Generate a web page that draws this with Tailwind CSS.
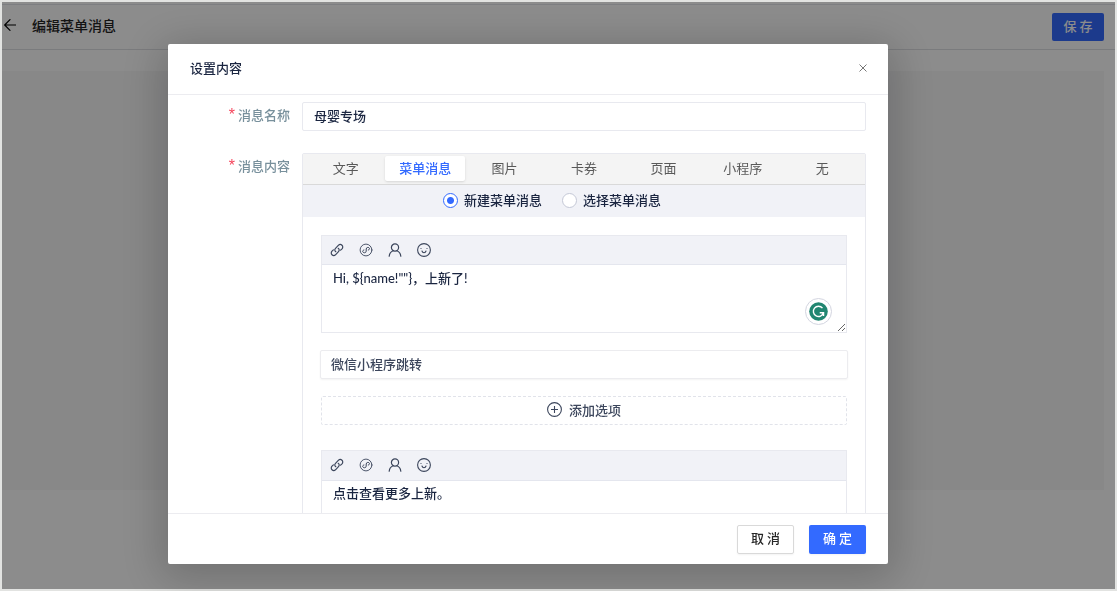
<!DOCTYPE html>
<html lang="zh-CN">
<head>
<meta charset="utf-8">
<title>编辑菜单消息</title>
<script src="https://cdn.jsdelivr.net/npm/@tailwindcss/browser@4"></script>
</head>
<body class="h-screen overflow-hidden border-2 border-[#e2e3e1] bg-white font-['Noto_Sans_CJK_SC',sans-serif] text-[13px] leading-5 font-medium text-[#1a2540]">
<svg class="hidden" aria-hidden="true">
  <symbol id="link" viewBox="0 0 14 14"><g fill="none" stroke="currentColor" stroke-width="1.2" stroke-linecap="round"><path d="M5.800 8.700C4.500 7.800 4.500 6.300 5.500 5.300l2.800-2.900c1.100-1.100 2.700-1.100 3.700-.2s1 2.500 0 3.600L10.600 7.200"/><path d="M8.200 5.300c1.300.9 1.300 2.400.3 3.400l-2.800 2.900c-1.100 1.100-2.700 1.100-3.700.2s-1-2.500 0-3.600L3.400 6.800"/></g></symbol>
  <symbol id="mini" viewBox="0 0 14 14"><g fill="none" stroke="currentColor" stroke-linecap="round"><circle cx="7" cy="7" r="5.900" stroke-width=".9"/><path d="M9.300 7c.9-.2 1.300-.8 1.200-1.500-.3-1.600-3.300-1.500-3.300.5v2.200c0 2-3.200 2-3.500.4-.1-.8.300-1.400 1.200-1.600" stroke-width="1"/></g></symbol>
  <symbol id="user" viewBox="0 0 14 14"><g fill="none" stroke="currentColor" stroke-width="1.200" stroke-linecap="round"><circle cx="7" cy="4.500" r="3.600"/><path d="M1.200 13.200c.3-2.800 1.800-4.600 4-5.400M12.800 13.200c-.3-2.800-1.800-4.600-4-5.400"/></g></symbol>
  <symbol id="smile" viewBox="0 0 14 14"><circle cx="7" cy="7" r="6.400" fill="none" stroke="currentColor" stroke-width="1.100"/><circle cx="4" cy="5.500" r=".6" fill="currentColor"/><circle cx="10" cy="5.500" r=".6" fill="currentColor"/><path d="M5 8C5.600 10.300 8.400 10.300 9 8" fill="none" stroke="currentColor" stroke-width="1.100" stroke-linecap="round"/></symbol>
</svg>

<div class="mt-0.5 border-t border-[#e4e5ec]">
  <header class="flex h-[45px] items-center justify-between border-b border-[#dfe0e4] pr-[11px] pl-0.5">
    <div class="flex items-center gap-4 pb-1">
      <button aria-label="返回" class="text-black"><svg class="size-3" viewBox="0 0 12 12" fill="none" stroke="currentColor" stroke-width="1.200" stroke-linecap="round" stroke-linejoin="round"><path d="M11.500 6H.7M6 .7.7 6 6 11.300"/></svg></button>
      <h1 class="text-sm font-medium text-[#262626]">编辑菜单消息</h1>
    </div>
    <button class="h-7 w-[52px] rounded-xs bg-[#336aff] pb-0.5 text-white">保 存</button>
  </header>
  <main class="mt-[21px] mr-[11px] h-[419px] bg-[#f7f7f8]"></main>
</div>

<div class="fixed inset-0.5 bg-black/45 pt-[42px] pr-4 pb-[25px] pl-[166px]">
  <section role="dialog" aria-labelledby="dlg" class="flex h-full max-w-[720px] flex-col rounded-xs bg-white shadow-[0_8px_44px_8px_rgba(0,0,0,0.2)]">
    <div class="flex h-[51px] shrink-0 items-center justify-between border-b border-[#ececf0] pr-[21px] pb-0.5 pl-[22px]">
      <h2 id="dlg" class="font-medium">设置内容</h2>
      <button aria-label="关闭" class="text-[#777]"><svg class="size-2" viewBox="0 0 8 8" fill="none" stroke="currentColor" stroke-width="1"><path d="M.5.5l7 7M7.500.5l-7 7"/></svg></button>
    </div>

    <form class="grid min-h-0 grow grid-cols-[122px_1fr] content-start gap-x-3 gap-y-[22px] overflow-hidden pt-[7px] pr-[22px]">
      <label for="name" class="pt-[3px] text-right text-[#78909c]"><span class="mr-[3px] font-['Liberation_Sans',sans-serif] text-base leading-4 text-[#f5455c]">*</span>消息名称</label>
      <input id="name" value="母婴专场" class="h-[29px] w-full rounded-xs border border-[#e8e9ef] px-[11px] pb-0.5 outline-none">

      <div class="pt-[3px] text-right text-[#78909c]"><span class="mr-[3px] font-['Liberation_Sans',sans-serif] text-base leading-4 text-[#f5455c]">*</span>消息内容</div>
      <div class="h-[480px] rounded-xs border border-[#e8e9ef]">
        <div role="tablist" class="grid h-[31px] grid-cols-7 border-b border-[#d9d9d9] bg-[#f4f4f4] px-[3px] pt-0.5 pb-[3px] font-normal text-[#595959]">
          <button type="button" role="tab" class="flex items-center justify-center pb-0.5">文字</button>
          <button type="button" role="tab" aria-selected="true" class="flex items-center justify-center rounded-xs bg-white pb-0.5 font-medium text-[#336aff] shadow-sm">菜单消息</button>
          <button type="button" role="tab" class="flex items-center justify-center pb-0.5">图片</button>
          <button type="button" role="tab" class="flex items-center justify-center pb-0.5">卡券</button>
          <button type="button" role="tab" class="flex items-center justify-center pb-0.5">页面</button>
          <button type="button" role="tab" class="flex items-center justify-center pb-0.5">小程序</button>
          <button type="button" role="tab" class="flex items-center justify-center pb-0.5">无</button>
        </div>
        <div class="flex h-8 items-center gap-5 bg-[#f1f2f7] pb-0.5 pl-[140px]">
          <label class="flex items-center gap-1.5"><input type="radio" name="mode" checked class="size-[15px] appearance-none rounded-full border border-[#336aff] bg-white bg-[radial-gradient(circle,#336aff_3px,transparent_4px)]">新建菜单消息</label>
          <label class="flex items-center gap-1.5"><input type="radio" name="mode" class="size-[15px] appearance-none rounded-full border border-[#c4c8d6] bg-white">选择菜单消息</label>
        </div>

        <div class="px-[18px] pt-[18px]">
          <div class="relative border border-[#e8e9ef]">
            <div class="flex h-[29px] items-center gap-[15px] border-b border-[#e4e6ee] bg-[#f1f2f7] pl-2 text-[#3c465c]">
              <button type="button" aria-label="链接"><svg class="size-3.5"><use href="#link"/></svg></button>
              <button type="button" aria-label="小程序"><svg class="size-3.5"><use href="#mini"/></svg></button>
              <button type="button" aria-label="昵称"><svg class="size-3.5"><use href="#user"/></svg></button>
              <button type="button" aria-label="表情"><svg class="size-3.5"><use href="#smile"/></svg></button>
            </div>
            <textarea aria-label="消息开头" class="block h-[67px] w-full resize px-[11px] py-[3px] font-['Lato','Noto_Sans_CJK_SC',sans-serif] outline-none">Hi, ${name!""}，上新了!</textarea>
            <span class="absolute right-[14px] bottom-[7px] flex size-[27px] items-center justify-center rounded-full border border-[#d3d5e0] bg-white">
              <svg class="size-[19px]" viewBox="0 0 20 20" fill="none"><circle cx="10" cy="10" r="9.800" fill="#218671"/><path d="M14.200 6.500A5.400 5.400 0 1 0 15.200 11.300H11.300M15.300 11.300v3.400" stroke="#fff" stroke-width="1.500"/></svg>
            </span>
          </div>

          <input aria-label="选项" value="微信小程序跳转" class="mt-[17px] -mx-px h-[29px] w-[calc(100%+2px)] rounded-xs border border-[#ececef] px-2.5 pb-0.5 text-[#3c465c] shadow-xs outline-none">

          <button type="button" class="mt-[17px] flex h-[29px] w-full items-center justify-center gap-[7px] rounded-xs border border-dashed border-[#e1e3ea] pb-0.5 text-[#3c465c]">
            <svg class="size-[15px]" viewBox="0 0 15 15" fill="none" stroke="currentColor" stroke-width="1.100"><circle cx="7.500" cy="7.500" r="6.900"/><path d="M4 7.500h7M7.500 4v7"/></svg>添加选项
          </button>

          <div class="mt-[25px] border border-[#e8e9ef]">
            <div class="flex h-[30px] items-center gap-[15px] border-b border-[#e4e6ee] bg-[#f1f2f7] pb-0.5 pl-2 text-[#3c465c]">
              <button type="button" aria-label="链接"><svg class="size-3.5"><use href="#link"/></svg></button>
              <button type="button" aria-label="小程序"><svg class="size-3.5"><use href="#mini"/></svg></button>
              <button type="button" aria-label="昵称"><svg class="size-3.5"><use href="#user"/></svg></button>
              <button type="button" aria-label="表情"><svg class="size-3.5"><use href="#smile"/></svg></button>
            </div>
            <textarea aria-label="消息结尾" class="block h-[67px] w-full resize px-[11px] py-0.5 outline-none">点击查看更多上新。</textarea>
          </div>
        </div>
      </div>
    </form>

    <footer class="flex h-[51px] shrink-0 items-center justify-end gap-[15px] border-t border-[#ececf0] px-[22px]">
      <button class="h-[29px] w-[57px] rounded-xs border border-[#d9d9d9] pb-0.5 text-[#262626] shadow-xs">取 消</button>
      <button class="h-[29px] w-[57px] rounded-xs bg-[#336aff] pb-0.5 text-white shadow-xs">确 定</button>
    </footer>
  </section>
</div>
</body>
</html>
